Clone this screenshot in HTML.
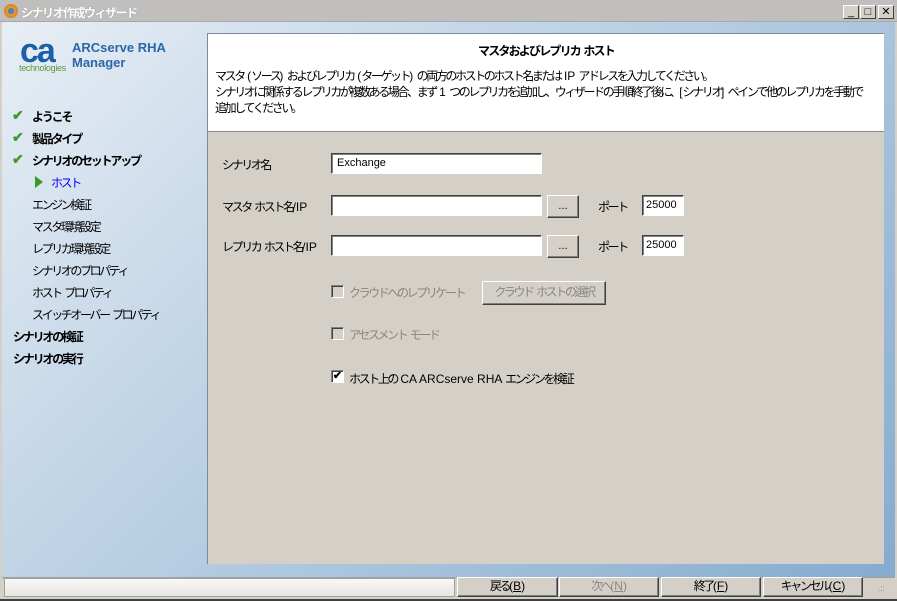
<!DOCTYPE html>
<html><head><meta charset="utf-8"><style>
*{margin:0;padding:0;box-sizing:border-box}
body{width:897px;height:601px;overflow:hidden;background:#d4d0c8;font-family:"Liberation Sans","Noto Sans CJK JP",sans-serif;font-size:12px;letter-spacing:-2.4px;color:#000;position:relative}
.a{position:absolute;white-space:nowrap}
.l{letter-spacing:0}
#title{left:0;top:0;width:897px;height:22px;background:#c0bfbd;border-bottom:1px solid #a8a8a8}
#bg{left:2px;top:22px;width:893px;height:555px;background:linear-gradient(135deg,#e8eef5 0%,#c3d6e7 35%,#9dbcd8 75%,#86abd0 100%)}
#panel{left:207px;top:33px;width:677px;height:531px;background:#d4d0c8;border-left:1px solid #7f8a96;border-top:1px solid #7f8a96}
#hdr{left:0;top:0;width:676px;height:98px;background:#fff;border-bottom:1px solid #8a8a8a}
.inp{position:absolute;background:#fff;border:1px solid;border-color:#404040 #fff #fff #404040;box-shadow:inset 1px 1px 0 #808080;height:21px;padding:3px 5px;font-size:11px;letter-spacing:0}
.btn{position:absolute;background:#d4d0c8;border:1px solid;border-color:#fff #404040 #404040 #fff;box-shadow:inset -1px -1px 0 #808080;text-align:center}
.cb{position:absolute;width:13px;height:13px;background:#fff;border:1px solid;border-color:#808080 #fff #fff #808080;box-shadow:inset 1px 1px 0 #404040;letter-spacing:0}
.cb.dis{background:#d4d0c8}
.nav{position:absolute;left:32px;white-space:nowrap}
.navb{position:absolute;left:32px;font-weight:bold;letter-spacing:-2.2px;white-space:nowrap}
.chk{position:absolute;left:12px;color:#3a9a2a;font-weight:bold;font-size:14px;letter-spacing:0}
.wb{position:absolute;top:5px;width:16px;height:14px;background:#d4d0c8;border:1px solid;border-color:#fff #404040 #404040 #fff;font-size:11px;line-height:12px;text-align:center;letter-spacing:0}
</style></head><body>
<div class="a" id="title">
 <div class="a" style="left:4px;top:4px;width:14px;height:14px;border-radius:50%;background:radial-gradient(circle,#5b7fb8 30%,#e8a030 35%,#c06a10 100%)"></div>
 <div class="a" style="left:21px;top:4px;color:#fff;font-weight:bold;font-size:12px;letter-spacing:-1.5px;text-shadow:0 0 1px #888">シナリオ作成ウィザード</div>
 <div class="wb" style="left:843px">_</div>
 <div class="wb" style="left:860px">□</div>
 <div class="wb" style="left:878px">✕</div>
</div>
<div class="a" id="bg"></div>
<div class="a" style="left:20px;top:34px;color:#1a5fa8;font-weight:bold;font-size:34px;letter-spacing:-2px;line-height:34px">ca</div>
<div class="a l" style="left:19px;top:63px;color:#5a9a3a;font-size:9px;letter-spacing:-0.3px">technologies</div>
<div class="a l" style="left:72px;top:40px;color:#2a67a8;font-weight:bold;font-size:13px;line-height:15px">ARCserve RHA<br>Manager</div>

<div class="chk" style="top:107px">✔</div><div class="navb" style="top:108px">ようこそ</div>
<div class="chk" style="top:129px">✔</div><div class="navb" style="top:130px">製品タイプ</div>
<div class="chk" style="top:151px">✔</div><div class="navb" style="top:152px">シナリオのセットアップ</div>
<div class="a" style="left:35px;top:176px;width:0;height:0;border-left:8px solid #3a9a2a;border-top:6px solid transparent;border-bottom:6px solid transparent"></div>
<div class="a" style="left:51px;top:174px;color:#0000ff">ホスト</div>
<div class="nav" style="top:196px">エンジン検証</div>
<div class="nav" style="top:218px">マスタ環境設定</div>
<div class="nav" style="top:240px">レプリカ環境設定</div>
<div class="nav" style="top:262px">シナリオのプロパティ</div>
<div class="nav" style="top:284px">ホスト<span class="l"> </span>プロパティ</div>
<div class="nav" style="top:306px">スイッチオーバー<span class="l"> </span>プロパティ</div>
<div class="navb" style="left:13px;top:328px">シナリオの検証</div>
<div class="navb" style="left:13px;top:350px">シナリオの実行</div>

<div class="a" id="panel">
 <div class="a" id="hdr">
  <div class="a" style="left:270px;top:8px;font-weight:bold;letter-spacing:-1.8px">マスタおよびレプリカ<span class="l"> </span>ホスト</div>
  <div class="a" style="left:7px;top:34px;line-height:16px">マスタ<span class="l"> (</span>ソース<span class="l">) </span>およびレプリカ<span class="l"> (</span>ターゲット<span class="l">) </span>の両方のホストのホスト名または<span class="l"> IP </span>アドレスを入力してください。<br>シナリオに関係するレプリカが複数ある場合、まず<span class="l"> 1 </span>つのレプリカを追加し、ウィザードの手順終了後に、<span class="l">[</span>シナリオ<span class="l">] </span>ペインで他のレプリカを手動で<br>追加してください。</div>
 </div>
 <div class="a" style="left:14px;top:122px">シナリオ名</div>
 <div class="inp" style="left:123px;top:119px;width:211px">Exchange</div>
 <div class="a" style="left:14px;top:164px">マスタ<span class="l"> </span>ホスト名<span class="l">/IP</span></div>
 <div class="inp" style="left:123px;top:161px;width:211px"></div>
 <div class="btn l" style="left:339px;top:161px;width:32px;height:23px;line-height:20px;font-size:11px">...</div>
 <div class="a" style="left:390px;top:164px">ポート</div>
 <div class="inp" style="left:434px;top:161px;width:42px;padding:3px 3px">25000</div>
 <div class="a" style="left:14px;top:204px">レプリカ<span class="l"> </span>ホスト名<span class="l">/IP</span></div>
 <div class="inp" style="left:123px;top:201px;width:211px"></div>
 <div class="btn l" style="left:339px;top:201px;width:32px;height:23px;line-height:20px;font-size:11px">...</div>
 <div class="a" style="left:390px;top:204px">ポート</div>
 <div class="inp" style="left:434px;top:201px;width:42px;padding:3px 3px">25000</div>
 <div class="cb dis" style="left:123px;top:251px"></div>
 <div class="a" style="left:141px;top:250px;color:#8a8680">クラウドへのレプリケート</div>
 <div class="btn" style="left:274px;top:247px;width:124px;height:24px;line-height:21px;color:#8a8680">クラウド<span class="l"> </span>ホストの選択</div>
 <div class="cb dis" style="left:123px;top:293px"></div>
 <div class="a" style="left:141px;top:292px;color:#8a8680">アセスメント<span class="l"> </span>モード</div>
 <div class="cb" style="left:123px;top:336px;font-size:11px;line-height:10px;text-align:center;font-weight:bold">✔</div>
 <div class="a" style="left:141px;top:336px">ホスト上の<span class="l"> CA ARCserve RHA </span>エンジンを検証</div>
</div>

<div class="a" style="left:2px;top:577px;width:893px;height:22px;background:#d4d0c8;border-top:1px solid #a0a0a0"></div>
<div class="a" style="left:4px;top:578px;width:451px;height:19px;background:linear-gradient(#f8f8f6,#e8e6e2);border:1px solid #a0a0a0"></div>
<div class="btn" style="left:457px;top:577px;width:101px;height:20px;line-height:17px">戻る<span class="l">(<u>B</u>)</span></div>
<div class="btn" style="left:559px;top:577px;width:100px;height:20px;line-height:17px;color:#8a8680">次へ<span class="l">(<u>N</u>)</span></div>
<div class="btn" style="left:661px;top:577px;width:100px;height:20px;line-height:17px">終了<span class="l">(<u>F</u>)</span></div>
<div class="btn" style="left:763px;top:577px;width:100px;height:20px;line-height:17px">キャンセル<span class="l">(<u>C</u>)</span></div>
<div class="a" style="left:878px;top:584px;color:#8a8680;font-size:8px;letter-spacing:0">.::</div>
<div class="a" style="left:0;top:599px;width:897px;height:2px;background:#404040"></div>
</body></html>
